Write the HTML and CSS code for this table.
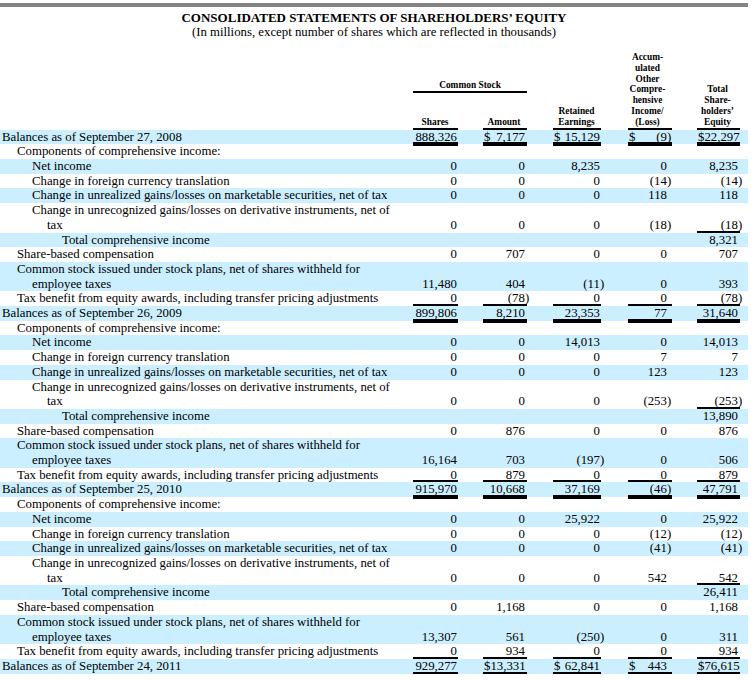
FILE: index.html
```html
<!DOCTYPE html>
<html>
<head>
<meta charset="utf-8">
<title>Consolidated Statements of Shareholders' Equity</title>
<link rel="stylesheet" href="styles.css">
</head>
<body>
<div class="bar"></div>
<h1 class="title">CONSOLIDATED STATEMENTS OF SHAREHOLDERS’ EQUITY</h1>
<p class="subtitle">(In millions, except number of shares which are reflected in thousands)</p>
<table class="sheet">
  <colgroup>
    <col class="w-label"><col class="w-shares"><col class="w-sp1"><col class="w-amount"><col class="w-sp2"><col class="w-ret"><col class="w-sp3"><col class="w-aoci"><col class="w-sp4"><col class="w-total"><col class="w-end">
  </colgroup>
  <thead>
    <tr class="h1">
      <th rowspan="2"></th>
      <th colspan="3" class="hc ul">Common Stock</th>
      <th rowspan="2"></th>
      <th rowspan="2" class="hc ul c-ret">Retained<br>Earnings</th>
      <th rowspan="2"></th>
      <th rowspan="2" class="hc ul c-aoci">Accum-<br>ulated<br>Other<br>Compre-<br>hensive<br>Income/<br>(Loss)</th>
      <th rowspan="2"></th>
      <th rowspan="2" class="hc ul c-total">Total<br>Share-<br>holders’<br>Equity</th>
      <th rowspan="2"></th>
    </tr>
    <tr class="h2">
      <th class="hc ul c-shares">Shares</th>
      <th></th>
      <th class="hc ul c-amount">Amount</th>
    </tr>
  </thead>
  <tbody>
    <!-- 2008 -> 2009 -->
    <tr class="b bal"><td class="l0">Balances as of September 27, 2008</td><td class="n">888,326</td><td></td><td class="n"><span class="d">$</span>7,177</td><td></td><td class="n"><span class="d">$</span>15,129</td><td></td><td class="n"><span class="d">$</span>(9<span class="p">)</span></td><td></td><td class="n"><span class="d">$</span>22,297</td><td></td></tr>
    <tr><td class="l1">Components of comprehensive income:</td><td></td><td></td><td></td><td></td><td></td><td></td><td></td><td></td><td></td><td></td></tr>
    <tr class="b"><td class="l2">Net income</td><td class="n">0</td><td></td><td class="n">0</td><td></td><td class="n">8,235</td><td></td><td class="n">0</td><td></td><td class="n">8,235</td><td></td></tr>
    <tr><td class="l2">Change in foreign currency translation</td><td class="n">0</td><td></td><td class="n">0</td><td></td><td class="n">0</td><td></td><td class="n">(14<span class="p">)</span></td><td></td><td class="n">(14<span class="p">)</span></td><td></td></tr>
    <tr class="b"><td class="l2">Change in unrealized gains/losses on marketable securities, net of tax</td><td class="n">0</td><td></td><td class="n">0</td><td></td><td class="n">0</td><td></td><td class="n">118</td><td></td><td class="n">118</td><td></td></tr>
    <tr><td class="l2 hang">Change in unrecognized gains/losses on derivative instruments, net of<br>tax</td><td class="n">0</td><td></td><td class="n">0</td><td></td><td class="n">0</td><td></td><td class="n">(18<span class="p">)</span></td><td></td><td class="n ul">(18<span class="p">)</span></td><td></td></tr>
    <tr class="b"><td class="l4">Total comprehensive income</td><td></td><td></td><td></td><td></td><td></td><td></td><td></td><td></td><td class="n">8,321</td><td></td></tr>
    <tr><td class="l1">Share-based compensation</td><td class="n">0</td><td></td><td class="n">707</td><td></td><td class="n">0</td><td></td><td class="n">0</td><td></td><td class="n">707</td><td></td></tr>
    <tr class="b"><td class="l1 hang">Common stock issued under stock plans, net of shares withheld for<br>employee taxes</td><td class="n">11,480</td><td></td><td class="n">404</td><td></td><td class="n">(11<span class="p">)</span></td><td></td><td class="n">0</td><td></td><td class="n">393</td><td></td></tr>
    <tr class="tax"><td class="l1">Tax benefit from equity awards, including transfer pricing adjustments</td><td class="n">0</td><td></td><td class="n">(78<span class="p">)</span></td><td></td><td class="n">0</td><td></td><td class="n">0</td><td></td><td class="n">(78<span class="p">)</span></td><td></td></tr>

    <!-- 2009 -> 2010 -->
    <tr class="b bal"><td class="l0">Balances as of September 26, 2009</td><td class="n">899,806</td><td></td><td class="n">8,210</td><td></td><td class="n">23,353</td><td></td><td class="n">77</td><td></td><td class="n">31,640</td><td></td></tr>
    <tr><td class="l1">Components of comprehensive income:</td><td></td><td></td><td></td><td></td><td></td><td></td><td></td><td></td><td></td><td></td></tr>
    <tr class="b"><td class="l2">Net income</td><td class="n">0</td><td></td><td class="n">0</td><td></td><td class="n">14,013</td><td></td><td class="n">0</td><td></td><td class="n">14,013</td><td></td></tr>
    <tr><td class="l2">Change in foreign currency translation</td><td class="n">0</td><td></td><td class="n">0</td><td></td><td class="n">0</td><td></td><td class="n">7</td><td></td><td class="n">7</td><td></td></tr>
    <tr class="b"><td class="l2">Change in unrealized gains/losses on marketable securities, net of tax</td><td class="n">0</td><td></td><td class="n">0</td><td></td><td class="n">0</td><td></td><td class="n">123</td><td></td><td class="n">123</td><td></td></tr>
    <tr><td class="l2 hang">Change in unrecognized gains/losses on derivative instruments, net of<br>tax</td><td class="n">0</td><td></td><td class="n">0</td><td></td><td class="n">0</td><td></td><td class="n">(253<span class="p">)</span></td><td></td><td class="n ul">(253<span class="p">)</span></td><td></td></tr>
    <tr class="b"><td class="l4">Total comprehensive income</td><td></td><td></td><td></td><td></td><td></td><td></td><td></td><td></td><td class="n">13,890</td><td></td></tr>
    <tr><td class="l1">Share-based compensation</td><td class="n">0</td><td></td><td class="n">876</td><td></td><td class="n">0</td><td></td><td class="n">0</td><td></td><td class="n">876</td><td></td></tr>
    <tr class="b"><td class="l1 hang">Common stock issued under stock plans, net of shares withheld for<br>employee taxes</td><td class="n">16,164</td><td></td><td class="n">703</td><td></td><td class="n">(197<span class="p">)</span></td><td></td><td class="n">0</td><td></td><td class="n">506</td><td></td></tr>
    <tr class="tax"><td class="l1">Tax benefit from equity awards, including transfer pricing adjustments</td><td class="n">0</td><td></td><td class="n">879</td><td></td><td class="n">0</td><td></td><td class="n">0</td><td></td><td class="n">879</td><td></td></tr>

    <!-- 2010 -> 2011 -->
    <tr class="b bal"><td class="l0">Balances as of September 25, 2010</td><td class="n">915,970</td><td></td><td class="n">10,668</td><td></td><td class="n">37,169</td><td></td><td class="n">(46<span class="p">)</span></td><td></td><td class="n">47,791</td><td></td></tr>
    <tr><td class="l1">Components of comprehensive income:</td><td></td><td></td><td></td><td></td><td></td><td></td><td></td><td></td><td></td><td></td></tr>
    <tr class="b"><td class="l2">Net income</td><td class="n">0</td><td></td><td class="n">0</td><td></td><td class="n">25,922</td><td></td><td class="n">0</td><td></td><td class="n">25,922</td><td></td></tr>
    <tr><td class="l2">Change in foreign currency translation</td><td class="n">0</td><td></td><td class="n">0</td><td></td><td class="n">0</td><td></td><td class="n">(12<span class="p">)</span></td><td></td><td class="n">(12<span class="p">)</span></td><td></td></tr>
    <tr class="b"><td class="l2">Change in unrealized gains/losses on marketable securities, net of tax</td><td class="n">0</td><td></td><td class="n">0</td><td></td><td class="n">0</td><td></td><td class="n">(41<span class="p">)</span></td><td></td><td class="n">(41<span class="p">)</span></td><td></td></tr>
    <tr><td class="l2 hang">Change in unrecognized gains/losses on derivative instruments, net of<br>tax</td><td class="n">0</td><td></td><td class="n">0</td><td></td><td class="n">0</td><td></td><td class="n">542</td><td></td><td class="n ul">542</td><td></td></tr>
    <tr class="b"><td class="l4">Total comprehensive income</td><td></td><td></td><td></td><td></td><td></td><td></td><td></td><td></td><td class="n">26,411</td><td></td></tr>
    <tr><td class="l1">Share-based compensation</td><td class="n">0</td><td></td><td class="n">1,168</td><td></td><td class="n">0</td><td></td><td class="n">0</td><td></td><td class="n">1,168</td><td></td></tr>
    <tr class="b"><td class="l1 hang">Common stock issued under stock plans, net of shares withheld for<br>employee taxes</td><td class="n">13,307</td><td></td><td class="n">561</td><td></td><td class="n">(250<span class="p">)</span></td><td></td><td class="n">0</td><td></td><td class="n">311</td><td></td></tr>
    <tr class="tax"><td class="l1">Tax benefit from equity awards, including transfer pricing adjustments</td><td class="n">0</td><td></td><td class="n">934</td><td></td><td class="n">0</td><td></td><td class="n">0</td><td></td><td class="n">934</td><td></td></tr>
    <tr class="b bal"><td class="l0">Balances as of September 24, 2011</td><td class="n">929,277</td><td></td><td class="n"><span class="d">$</span>13,331</td><td></td><td class="n"><span class="d">$</span>62,841</td><td></td><td class="n"><span class="d">$</span>443</td><td></td><td class="n"><span class="d">$</span>76,615</td><td></td></tr>
  </tbody>
</table>
</body>
</html>
```

FILE: styles.css
```css
html, body {
  margin: 0;
  padding: 0;
  background: #fff;
}
body {
  font-family: "Liberation Serif", "Times New Roman", serif;
  color: #000;
  width: 753px;
}
.bar {
  margin-top: 3px;
  width: 748px;
  height: 4px;
  background: #838383;
}
.title {
  width: 748px;
  margin: 4px 0 0 0;
  font-size: 13px;
  line-height: 14.4px;
  font-weight: bold;
  text-align: center;
}
.subtitle {
  width: 748px;
  margin: 0;
  font-size: 12.8px;
  line-height: 14.2px;
  text-align: center;
}
.sheet {
  margin-top: 10px;
  width: 748px;
  table-layout: fixed;
  border-collapse: collapse;
  border-spacing: 0;
}
.w-label { width: 413px; }
.w-shares { width: 45px; }
.w-sp1 { width: 25px; }
.w-amount { width: 44px; }
.w-sp2 { width: 26px; }
.w-ret { width: 48px; }
.w-sp3 { width: 27px; }
.w-aoci { width: 44px; }
.w-sp4 { width: 25px; }
.w-total { width: 43px; }
.w-end { width: 8px; }

.sheet th {
  padding: 0;
  font-size: 9.4px;
  line-height: 10.8px;
  font-weight: bold;
  vertical-align: bottom;
  text-align: center;
}
.sheet tr.h1 { height: 43px; }
.sheet tr.h2 { height: 37px; }
.sheet th.hc { padding-bottom: 2px; }
.sheet th.ul { box-shadow: inset 0 -2px 0 #000; }
.sheet th.c-aoci { padding-right: 5px; }
.sheet th.c-total { padding-right: 2px; }
.sheet th.c-amount { padding-right: 2px; }
.sheet th.c-ret, .sheet th.c-shares { padding-right: 1px; }

.sheet td {
  padding: 0;
  font-size: 12.8px;
  line-height: 14.7px;
  vertical-align: bottom;
  white-space: nowrap;
}
.sheet tr.b td { background: #ccefff; }

.l0 { padding-left: 2px !important; }
.l1 { padding-left: 17px !important; }
.l2 { padding-left: 32px !important; }
.l4 { padding-left: 62px !important; }
.l1.hang { padding-left: 32px !important; text-indent: -15px; }
.l2.hang { padding-left: 47px !important; text-indent: -15px; }

.sheet td.n { text-align: right; }
.sheet td:nth-child(2) { padding-right: 1px; }
.sheet td:nth-child(4) { padding-right: 2px; }
.sheet td:nth-child(6) { padding-right: 1px; }
.sheet td:nth-child(8) { padding-right: 5px; }
.sheet td:nth-child(10) { padding-right: 2px; }

.p { margin-right: -4.2px; }
.d { float: left; padding-left: 1px; }

.sheet td.ul { box-shadow: inset 0 -2px 0 #000; }
.sheet tr.tax td.n { box-shadow: inset 0 -2px 0 #000; }
.sheet tr.bal td.n { position: relative; }
.sheet tr.bal td.n::after {
  content: "";
  position: absolute;
  left: 0;
  right: 0;
  bottom: -2px;
  height: 4px;
  background: #000;
}
```
